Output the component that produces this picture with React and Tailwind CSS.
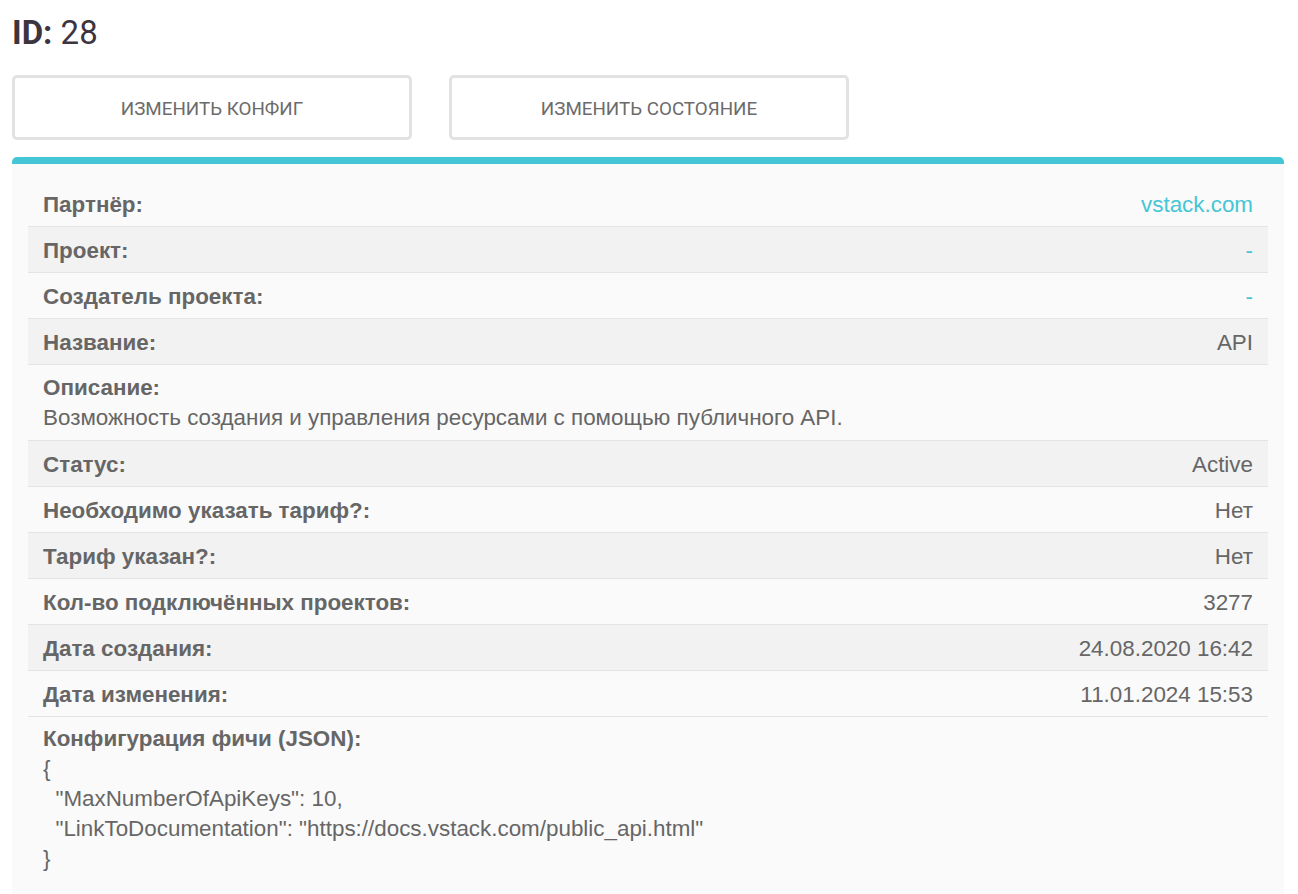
import React from 'react';

const rows = [
  { label: 'Партнёр:', value: 'vstack.com', link: true },
  { label: 'Проект:', value: '-', link: true },
  { label: 'Создатель проекта:', value: '-', link: true },
  { label: 'Название:', value: 'API' },
  { label: 'Описание:', value: 'Возможность создания и управления ресурсами с помощью публичного API.', block: true },
  { label: 'Статус:', value: 'Active' },
  { label: 'Необходимо указать тариф?:', value: 'Нет' },
  { label: 'Тариф указан?:', value: 'Нет' },
  { label: 'Кол-во подключённых проектов:', value: '3277' },
  { label: 'Дата создания:', value: '24.08.2020 16:42' },
  { label: 'Дата изменения:', value: '11.01.2024 15:53' },
];

const json = `{
  "MaxNumberOfApiKeys": 10,
  "LinkToDocumentation": "https://docs.vstack.com/public_api.html"
}`;

function Row({ row, index }) {
  const bg = index % 2 === 1 ? 'bg-[#f2f2f2]' : '';
  if (row.block) {
    return (
      <div className={`px-[15px] pt-2 pb-[7px] leading-[30px] border-b border-[#e4e4e4] ${bg}`}>
        <div className="font-bold">{row.label}</div>
        <div>{row.value}</div>
      </div>
    );
  }
  return (
    <div className={`flex justify-between px-[15px] pt-[9px] pb-[7px] border-b border-[#e4e4e4] ${bg}`}>
      <span className="font-bold">{row.label}</span>
      <span className={row.link ? 'text-[#45c6d6]' : ''}>{row.value}</span>
    </div>
  );
}

export default function App() {
  return (
    <div className="min-h-screen bg-white pl-3 pr-[14px] pt-[15px]">
      <h1 className="text-[33px] leading-[36px] text-[#3c3540] font-['Roboto',sans-serif]">
        <span className="font-bold">ID:</span> 28
      </h1>

      <div className="flex gap-[37px] mt-6">
        <button className="w-[400px] h-[65px] pt-[3px] border-[3px] border-[#e2e2e2] rounded-[5px] bg-white text-[18.8px] text-[#6b6b6b] uppercase font-['Roboto',sans-serif]">
          Изменить конфиг
        </button>
        <button className="w-[400px] h-[65px] pt-[3px] border-[3px] border-[#e2e2e2] rounded-[5px] bg-white text-[18.8px] text-[#6b6b6b] uppercase font-['Roboto',sans-serif]">
          Изменить состояние
        </button>
      </div>

      <div className="mt-[17px] bg-[#fafafa] border-t-[7px] border-[#45c6d6] rounded-t-[5px] px-4 pt-[17px] pb-6 text-[22.4px] leading-[29px] text-[#666666] font-['Liberation_Sans',Arial,sans-serif]">
        {rows.map((row, i) => (
          <Row key={row.label} row={row} index={i} />
        ))}
        <div className="px-[15px] pt-[7px] pb-2 leading-[30px]">
          <div className="font-bold">Конфигурация фичи (JSON):</div>
          <div className="whitespace-pre-wrap">{json}</div>
        </div>
      </div>
    </div>
  );
}
